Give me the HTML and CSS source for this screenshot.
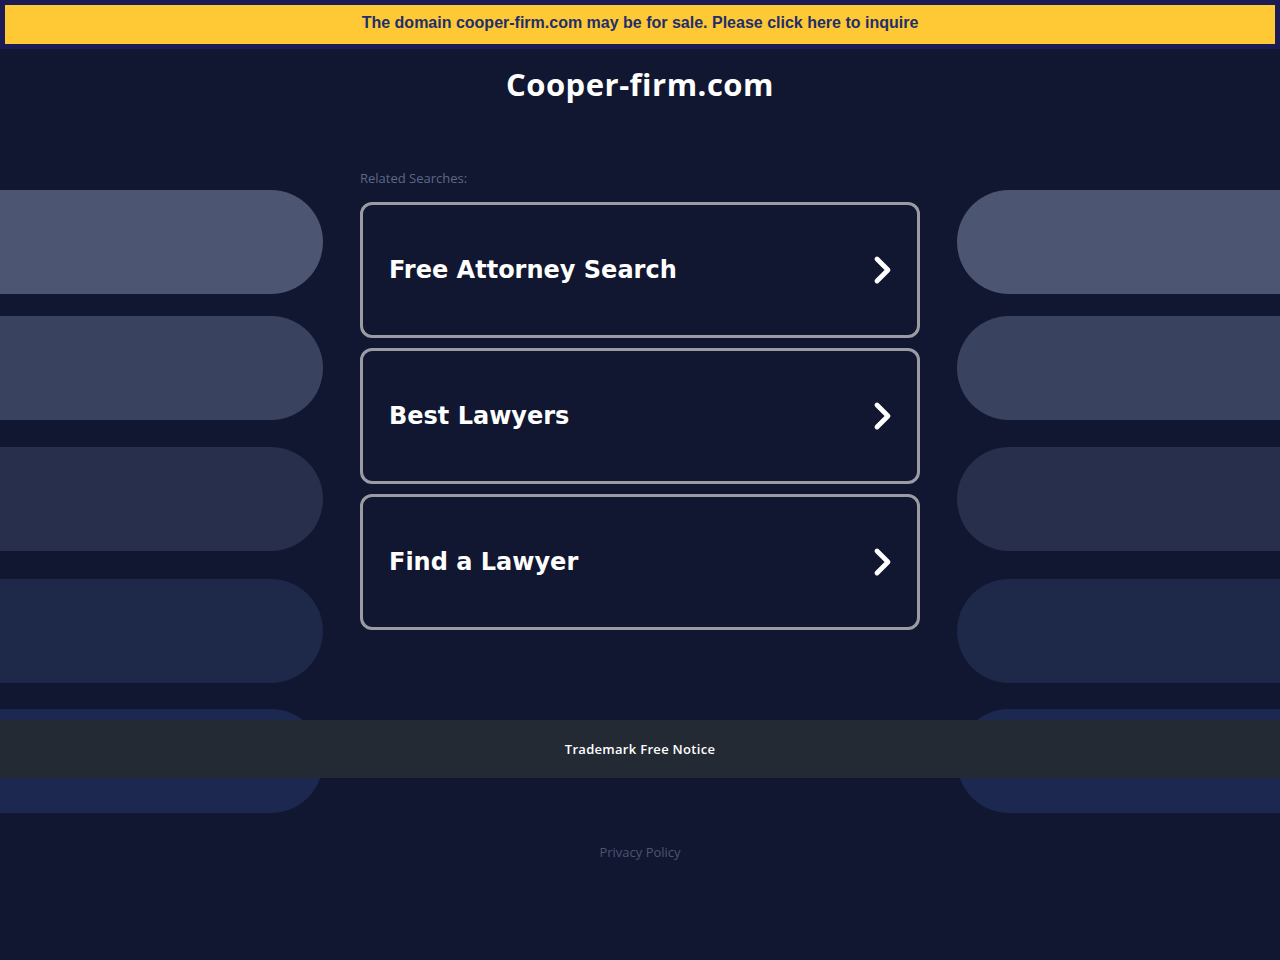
FILE: index.html
```html
<!DOCTYPE html>
<html lang="en">
<head>
<meta charset="utf-8">
<title>Cooper-firm.com</title>
<link rel="stylesheet" href="styles.css">
</head>
<body>
<div class="deco deco-left">
  <div class="pill p1"></div>
  <div class="pill p2"></div>
  <div class="pill p3"></div>
  <div class="pill p4"></div>
  <div class="pill p5"></div>
</div>
<div class="deco deco-right">
  <div class="pill p1"></div>
  <div class="pill p2"></div>
  <div class="pill p3"></div>
  <div class="pill p4"></div>
  <div class="pill p5"></div>
</div>

<div class="banner-wrap">
  <a class="banner" href="#">The domain cooper-firm.com may be for sale. Please click here to inquire</a>
</div>

<h1 class="title">Cooper-firm.com</h1>

<main class="content">
  <div class="related">Related Searches:</div>
  <div class="cards">
    <a class="card" href="#"><span class="card-text">Free Attorney Search</span>
      <svg class="chev" width="24" height="30" viewBox="0 0 24 30"><polyline points="5,4 16,15 5,26" fill="none" stroke="#fff" stroke-width="4.8" stroke-linecap="round" stroke-linejoin="round"/></svg></a>
    <a class="card" href="#"><span class="card-text">Best Lawyers</span>
      <svg class="chev" width="24" height="30" viewBox="0 0 24 30"><polyline points="5,4 16,15 5,26" fill="none" stroke="#fff" stroke-width="4.8" stroke-linecap="round" stroke-linejoin="round"/></svg></a>
    <a class="card" href="#"><span class="card-text">Find a Lawyer</span>
      <svg class="chev" width="24" height="30" viewBox="0 0 24 30"><polyline points="5,4 16,15 5,26" fill="none" stroke="#fff" stroke-width="4.8" stroke-linecap="round" stroke-linejoin="round"/></svg></a>
  </div>
</main>

<footer class="footer-bar">
  <a class="trademark" href="#">Trademark Free Notice</a>
</footer>

<div class="privacy"><a href="#">Privacy Policy</a></div>
</body>
</html>
```
FILE: styles.css
```css
html, body {
  margin: 0;
  padding: 0;
}
body {
  background: #111730;
  min-height: 960px;
  position: relative;
  font-family: "Open Sans", "Noto Sans", sans-serif;
  overflow: hidden;
}
a { text-decoration: none; }

.deco {
  position: absolute;
  top: 190px;
  width: 323px;
  display: flex;
  flex-direction: column;
  z-index: 0;
}
.deco-left { left: 0; }
.deco-right { right: 0; }
.pill {
  height: 104px;
}
.deco-left .pill { border-radius: 0 52px 52px 0; }
.deco-right .pill { border-radius: 52px 0 0 52px; }
.p1 { background: #4c5673; }
.p2 { background: #39425f; margin-top: 22px; }
.p3 { background: #272f4d; margin-top: 27px; }
.p4 { background: #1e2848; margin-top: 28px; }
.p5 { background: #1c2850; margin-top: 26px; }

.banner-wrap {
  position: relative;
  z-index: 1;
  background: #1b1b55;
  padding: 5px;
}
.banner {
  display: block;
  height: 39px;
  line-height: 36px;
  background: #fec934;
  color: #1e2f6b;
  text-align: center;
  font-family: "Liberation Sans", Arial, sans-serif;
  font-weight: bold;
  font-size: 16px;
}

.title {
  position: relative;
  z-index: 1;
  margin: 15px 0 0;
  text-align: center;
  color: #fff;
  font-family: "Open Sans", sans-serif;
  font-weight: 700;
  font-size: 31px;
  line-height: 40px;
  letter-spacing: 0.5px;
}

.content {
  position: relative;
  z-index: 1;
  width: 560px;
  margin: 0 auto;
  padding-top: 66px;
}
.related {
  font-size: 13px;
  line-height: 16px;
  color: #5d6884;
  margin-bottom: 16px;
}
.cards {
  display: flex;
  flex-direction: column;
  gap: 10px;
}
.card {
  box-sizing: border-box;
  height: 136px;
  border: 3px solid #9b9ca3;
  border-radius: 12px;
  background: #111730;
  display: flex;
  align-items: center;
  justify-content: space-between;
  padding: 0 21px 0 26px;
}
.card-text {
  color: #fff;
  font-family: "DejaVu Sans", Verdana, sans-serif;
  font-weight: bold;
  font-size: 24px;
}
.chev { display: block; }

.footer-bar {
  position: relative;
  z-index: 1;
  margin-top: 90px;
  height: 58px;
  background: #232a34;
  display: flex;
  align-items: center;
  justify-content: center;
}
.trademark {
  color: #fff;
  font-family: "Open Sans", sans-serif;
  font-weight: 600;
  font-size: 13px;
  letter-spacing: 0.3px;
}
.privacy {
  position: relative;
  z-index: 1;
  margin-top: 65px;
  text-align: center;
  font-size: 13px;
  line-height: 18px;
}
.privacy a { color: #4b5473; }
```
